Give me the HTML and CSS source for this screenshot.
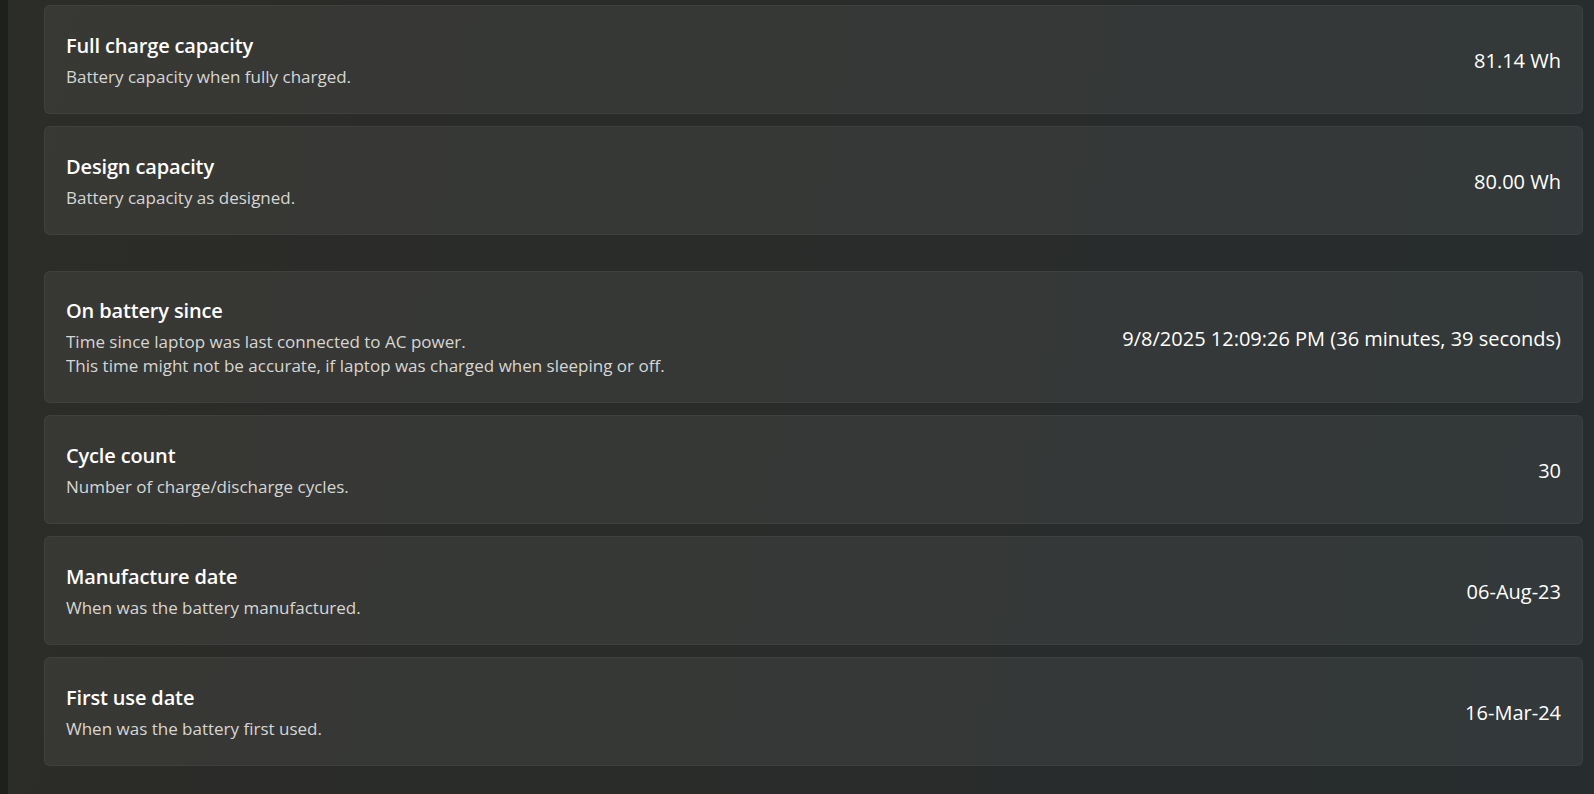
FILE: index.html
```html
<!DOCTYPE html>
<html lang="en">
<head>
  <meta charset="UTF-8" />
  <meta name="viewport" content="width=device-width, initial-scale=1" />
  <title>Battery details</title>
  <link rel="stylesheet" href="styles.css">
</head>
<body>

  <div class="window">
    <div class="edge"></div>

    <main class="content">
      <section class="group">
        <div class="card">
          <div class="card-text">
            <div class="card-title">Full charge capacity</div>
            <div class="card-desc">Battery capacity when fully charged.</div>
          </div>
          <div class="card-value">81.14 Wh</div>
        </div>

        <div class="card">
          <div class="card-text">
            <div class="card-title">Design capacity</div>
            <div class="card-desc">Battery capacity as designed.</div>
          </div>
          <div class="card-value">80.00 Wh</div>
        </div>
      </section>

      <section class="group">
        <div class="card tall">
          <div class="card-text">
            <div class="card-title">On battery since</div>
            <div class="card-desc">Time since laptop was last connected to AC power.<br>This time might not be accurate, if laptop was charged when sleeping or off.</div>
          </div>
          <div class="card-value">9/8/2025 12:09:26 PM (36 minutes, 39 seconds)</div>
        </div>

        <div class="card">
          <div class="card-text">
            <div class="card-title">Cycle count</div>
            <div class="card-desc">Number of charge/discharge cycles.</div>
          </div>
          <div class="card-value">30</div>
        </div>

        <div class="card">
          <div class="card-text">
            <div class="card-title">Manufacture date</div>
            <div class="card-desc">When was the battery manufactured.</div>
          </div>
          <div class="card-value">06-Aug-23</div>
        </div>

        <div class="card">
          <div class="card-text">
            <div class="card-title">First use date</div>
            <div class="card-desc">When was the battery first used.</div>
          </div>
          <div class="card-value">16-Mar-24</div>
        </div>
      </section>
    </main>
  </div>

</body>
</html>
```

FILE: styles.css
```css
html, body {
  height: 100%;
}

body {
  margin: 0;
  font-family: 'Open Sans', 'Noto Sans', sans-serif;
  color: #ffffff;
  background: linear-gradient(100deg, #2c2c28 0%, #2a2c2a 45%, #272c2e 100%);
  overflow: hidden;
}

.window {
  display: flex;
  min-height: 100%;
}

.edge {
  flex: 0 0 8px;
  background: #1d201d;
}

.content {
  flex: 1;
  padding: 5px 11px 0 36px;
  display: flex;
  flex-direction: column;
  gap: 36px;
}

.group {
  display: flex;
  flex-direction: column;
  gap: 12px;
}

.card {
  display: flex;
  align-items: center;
  justify-content: space-between;
  height: 109px;
  box-sizing: border-box;
  padding: 2px 21px 0 21px;
  background: rgba(255, 255, 255, 0.058);
  border: 1px solid rgba(255, 255, 255, 0.045);
  border-radius: 6px;
}

.card.tall {
  height: 132px;
}

.card-title {
  font-size: 20px;
  font-weight: 600;
  line-height: 26px;
  letter-spacing: -0.15px;
  margin-bottom: 6px;
}

.card-desc {
  font-size: 17px;
  line-height: 24px;
  color: #d6d6d4;
}

.card-value {
  font-size: 20px;
}
```
